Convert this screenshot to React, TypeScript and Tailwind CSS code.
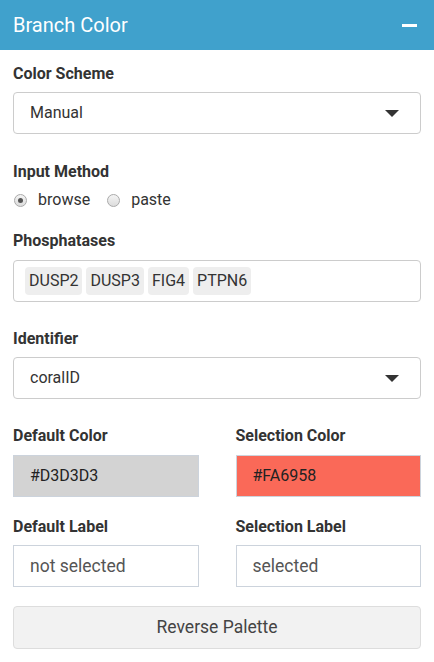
import { useState } from "react";

/* =======================
   Small pieces
======================= */

const Label = ({ children }: { children: React.ReactNode }) => (
  <div className="text-[16px] font-bold leading-[22px] text-[#333]">{children}</div>
);

const Caret = () => (
  <svg width="14" height="7" viewBox="0 0 14 7" className="shrink-0">
    <path d="M0 0 L14 0 L7 7 Z" fill="#333" />
  </svg>
);

const SelectBox = ({ value }: { value: string }) => (
  <div className="flex h-[42px] items-center justify-between rounded border border-[#ccc] bg-white pl-4 pr-[21px] text-[16px] text-[#333]">
    <span>{value}</span>
    <Caret />
  </div>
);

const Radio = ({ checked, label }: { checked: boolean; label: string }) => (
  <label className="flex items-center gap-[11px] text-[16px] text-[#333]">
    <span className="flex h-[13px] w-[13px] items-center justify-center rounded-full border border-[#aaa] bg-gradient-to-b from-[#f4f4f4] to-[#dcdcdc]">
      {checked && <span className="h-[5px] w-[5px] rounded-full bg-[#555]" />}
    </span>
    {label}
  </label>
);

const TextBox = ({ value }: { value: string }) => (
  <div className="mt-[7px] flex h-[42px] items-center border border-[#ccd3dc] bg-white pl-4 text-[17.5px] text-[#555]">
    {value}
  </div>
);

/* =======================
   Component
======================= */

const App = () => {
  const [method, setMethod] = useState("browse");
  const tags = ["DUSP2", "DUSP3", "FIG4", "PTPN6"];

  return (
    <div
      className="h-[662px] w-[434px] bg-white"
      style={{ fontFamily: "Roboto, 'Liberation Sans', sans-serif" }}
    >
      {/* Header */}
      <div className="flex h-[50px] items-center justify-between bg-[#40a1cc] pl-[13px] pr-[17px]">
        <span className="text-[20px] text-white">Branch Color</span>
        <span className="h-[3px] w-[15px] bg-white" />
      </div>

      <div className="px-[13px]">
        {/* Color scheme */}
        <div className="mt-[13px]">
          <Label>Color Scheme</Label>
        </div>
        <div className="mt-[7px]">
          <SelectBox value="Manual" />
        </div>

        {/* Input method */}
        <div className="mt-[27px]">
          <Label>Input Method</Label>
        </div>
        <div
          className="mt-[7px] flex h-5 items-center gap-[17px] pl-px"
          onClick={() => setMethod(method === "browse" ? "paste" : "browse")}
        >
          <Radio checked={method === "browse"} label="browse" />
          <Radio checked={method === "paste"} label="paste" />
        </div>

        {/* Phosphatases */}
        <div className="mt-[20px]">
          <Label>Phosphatases</Label>
        </div>
        <div className="mt-[8px] flex h-[42px] items-center gap-1 rounded border border-[#ccc] px-[11px]">
          {tags.map((t) => (
            <span
              key={t}
              className="flex h-[28px] items-center rounded-sm bg-[#eeeeee] px-1 text-[16px] text-[#333]"
            >
              {t}
            </span>
          ))}
        </div>

        {/* Identifier */}
        <div className="mt-[26px]">
          <Label>Identifier</Label>
        </div>
        <div className="mt-[7px]">
          <SelectBox value="coralID" />
        </div>

        {/* Colors */}
        <div className="mt-[26px] grid grid-cols-2 gap-x-[37px]">
          <div>
            <Label>Default Color</Label>
            <div className="mt-[8px] flex h-[42px] items-center border border-[#ccd3dc] bg-[#d3d3d3] pl-4 text-[16px] text-[#222]">
              #D3D3D3
            </div>
          </div>
          <div>
            <Label>Selection Color</Label>
            <div className="mt-[8px] flex h-[42px] items-center border border-[#ccd3dc] bg-[#fa6958] pl-4 text-[16px] text-[#222]">
              #FA6958
            </div>
          </div>
        </div>

        {/* Labels */}
        <div className="mt-[19px] grid grid-cols-2 gap-x-[37px]">
          <div>
            <Label>Default Label</Label>
            <TextBox value="not selected" />
          </div>
          <div>
            <Label>Selection Label</Label>
            <TextBox value="selected" />
          </div>
        </div>

        {/* Button */}
        <button className="mt-[19px] flex h-[43px] w-full items-center justify-center rounded border border-[#ddd] bg-[#f2f2f2] text-[17.5px] text-[#444]">
          Reverse Palette
        </button>
      </div>
    </div>
  );
};

export default App;
